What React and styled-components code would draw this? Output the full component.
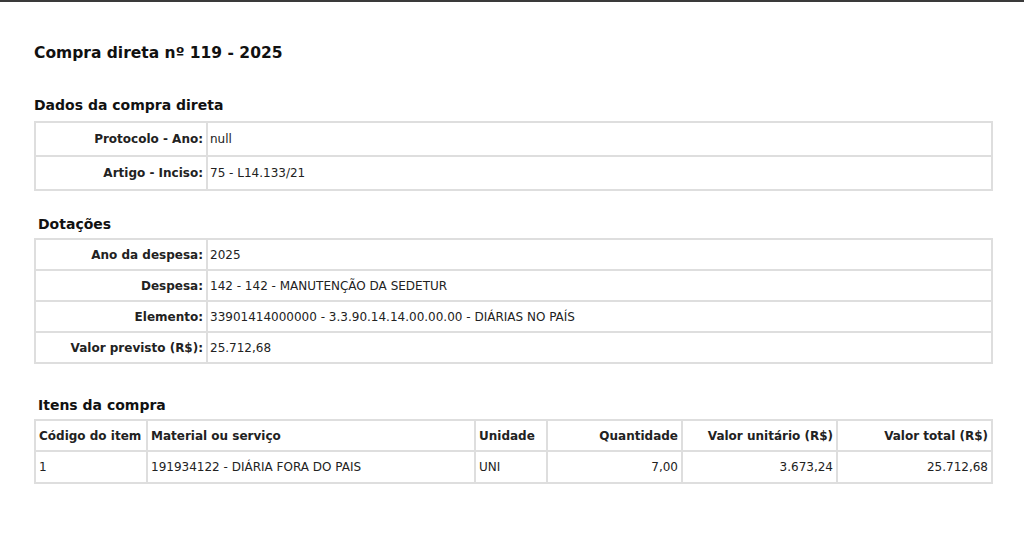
import React from "react";
import styled, { createGlobalStyle } from "styled-components";

const GlobalStyle = createGlobalStyle`
  body {
    margin: 0;
    background: #fff;
    font-family: "DejaVu Sans", "Noto Sans", sans-serif;
    color: #222;
  }
`;

const Page = styled.div`
  border-top: 2px solid #3a3a3a;
  padding: 42px 31px 40px 34px;
`;

const Title = styled.h1`
  margin: 0;
  font-size: 15.5px;
  line-height: 19px;
  font-weight: bold;
  color: #111;
`;

const Section = styled.section`
  margin-top: ${(p) => p.top}px;
`;

const SectionTitle = styled.h2`
  margin: 0 0 ${(p) => p.gap || 5}px ${(p) => p.indent || 0}px;
  font-size: 14px;
  line-height: 17px;
  font-weight: bold;
  color: #111;
`;

const Table = styled.table`
  width: 100%;
  border-collapse: collapse;
  table-layout: ${(p) => (p.fixed ? "fixed" : "auto")};
  font-size: 12px;
  color: #222;
`;

const Row = styled.tr`
  height: ${(p) => p.height}px;
`;

const Label = styled.th`
  width: 164px;
  border: 2px solid #dedede;
  padding: 0 3px;
  text-align: right;
  font-weight: bold;
  white-space: nowrap;
`;

const Value = styled.td`
  border: 2px solid #dedede;
  padding: 0 2px;
  text-align: left;
`;

const Head = styled.th`
  border: 2px solid #dedede;
  padding: 0 3px;
  font-weight: bold;
  white-space: nowrap;
  text-align: ${(p) => (p.right ? "right" : "left")};
`;

const Cell = styled.td`
  border: 2px solid #dedede;
  padding: 0 3px;
  white-space: nowrap;
  text-align: ${(p) => (p.right ? "right" : "left")};
`;

const dados = [
  ["Protocolo - Ano:", "null"],
  ["Artigo - Inciso:", "75 - L14.133/21"],
];

const dotacoes = [
  ["Ano da despesa:", "2025"],
  ["Despesa:", "142 - 142 - MANUTENÇÃO DA SEDETUR"],
  ["Elemento:", "33901414000000 - 3.3.90.14.14.00.00.00 - DIÁRIAS NO PAÍS"],
  ["Valor previsto (R$):", "25.712,68"],
];

const columns = [
  { label: "Código do item", w: 112 },
  { label: "Material ou serviço", w: 328 },
  { label: "Unidade", w: 72 },
  { label: "Quantidade", w: 135, right: true },
  { label: "Valor unitário (R$)", w: 155, right: true },
  { label: "Valor total (R$)", right: true },
];

const itens = [["1", "191934122 - DIÁRIA FORA DO PAIS", "UNI", "7,00", "3.673,24", "25.712,68"]];

function KeyValueTable({ rows, height }) {
  return (
    <Table>
      <tbody>
        {rows.map(([k, v]) => (
          <Row key={k} height={height}>
            <Label>{k}</Label>
            <Value>{v}</Value>
          </Row>
        ))}
      </tbody>
    </Table>
  );
}

export default function App() {
  return (
    <>
      <GlobalStyle />
      <Page>
        <Title>Compra direta nº 119 - 2025</Title>

        <Section top={34}>
          <SectionTitle gap={7}>Dados da compra direta</SectionTitle>
          <KeyValueTable rows={dados} height={34} />
        </Section>

        <Section top={25}>
          <SectionTitle indent={4}>Dotações</SectionTitle>
          <KeyValueTable rows={dotacoes} height={31} />
        </Section>

        <Section top={33}>
          <SectionTitle indent={4}>Itens da compra</SectionTitle>
          <Table fixed>
            <colgroup>
              {columns.map((c) => (
                <col key={c.label} style={c.w ? { width: c.w } : undefined} />
              ))}
            </colgroup>
            <thead>
              <Row height={31}>
                {columns.map((c) => (
                  <Head key={c.label} right={c.right}>
                    {c.label}
                  </Head>
                ))}
              </Row>
            </thead>
            <tbody>
              {itens.map((r) => (
                <Row key={r[0]} height={32}>
                  {r.map((v, i) => (
                    <Cell key={i} right={columns[i].right}>
                      {v}
                    </Cell>
                  ))}
                </Row>
              ))}
            </tbody>
          </Table>
        </Section>
      </Page>
    </>
  );
}
